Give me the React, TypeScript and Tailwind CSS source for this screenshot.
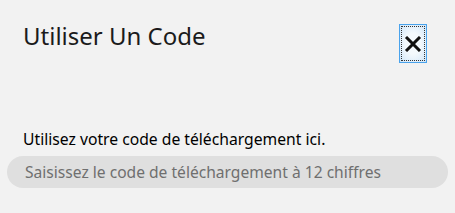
import React from "react";

export default function App() {
  return (
    <div className="w-[455px] h-[213px] bg-[#f2f2f2] font-['Noto_Sans',sans-serif] text-[#1a1a1a] flex flex-col">
      <div className="flex items-start justify-between pl-[23px] pr-[28px] pt-[20px]">
        <h1 className="text-[24px] leading-[32px] text-[#1b1b1b]">Utiliser Un Code</h1>
        <button
          aria-label="Fermer"
          className="mt-[4px] w-[28px] h-[39px] flex items-center justify-center border border-[#4aa3ec] outline-1 outline-dotted outline-[#333] outline-offset-[-3px] bg-[radial-gradient(ellipse_at_center,#f4f9fd_40%,#cfe5f8_100%)]"
        >
          <svg width="18" height="16" viewBox="0 0 18 16">
            <path d="M2 1 L16 15 M16 1 L2 15" stroke="#111" strokeWidth="3" strokeLinecap="butt" />
          </svg>
        </button>
      </div>
      <p className="mt-[66px] pl-[23px] text-[15.7px] leading-[20px] text-black">
        Utilisez votre code de téléchargement ici.
      </p>
      <div className="mt-[7px] mx-[7px]">
        <input
          type="text"
          placeholder="Saisissez le code de téléchargement à 12 chiffres"
          className="w-full h-[32px] rounded-full bg-[#dfdfdf] pl-[18px] text-[15.6px] text-[#333] placeholder:text-[#6f6f6f] outline-none"
        />
      </div>
    </div>
  );
}
